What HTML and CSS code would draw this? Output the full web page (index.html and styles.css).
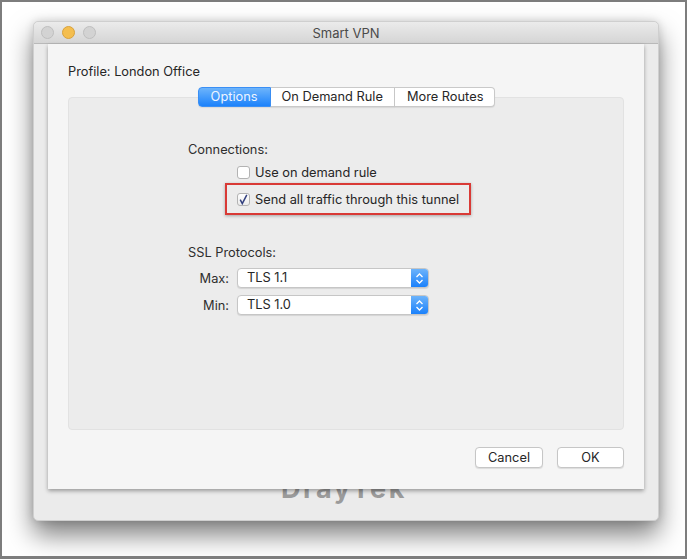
FILE: index.html
```html
<!DOCTYPE html>
<html lang="en">
<head>
    <meta charset="UTF-8">
    <title>Smart VPN</title>
    <link rel="stylesheet" href="styles.css">
</head>
<body>
<div class="frame">
    <div class="window">
        <div class="titlebar">
            <div class="lights">
                <span class="light"></span>
                <span class="light light-yellow"></span>
                <span class="light"></span>
            </div>
            <div class="title">Smart VPN</div>
        </div>
        <div class="window-body">
            <div class="ghost">DrayTek</div>

            <div class="sheet">
                <div class="profile">Profile: London Office</div>

                <div class="tabs">
                    <span class="tab tab-active">Options</span>
                    <span class="tab">On Demand Rule</span>
                    <span class="tab">More Routes</span>
                </div>

                <div class="tab-box">
                    <div class="section-title">Connections:</div>
                    <div class="check-row">
                        <span class="checkbox"></span>
                        <span>Use on demand rule</span>
                    </div>
                    <div class="highlight">
                        <div class="check-row check-row-inner">
                            <span class="checkbox checked">
                                <svg width="11" height="11" viewBox="0 0 11 11"><path d="M2.2 5.6 L4.3 9.6 L8.8 0.8" fill="none" stroke="#33407f" stroke-width="1.5"/></svg>
                            </span>
                            <span>Send all traffic through this tunnel</span>
                        </div>
                    </div>

                    <div class="section-title ssl-title">SSL Protocols:</div>
                    <div class="proto-grid">
                        <span class="proto-label">Max:</span>
                        <div class="select">
                            <span class="select-value">TLS 1.1</span>
                            <span class="stepper">
                                <svg width="9" height="13" viewBox="0 0 9 13"><path d="M1.5 5 L4.5 2 L7.5 5 M1.5 8 L4.5 11 L7.5 8" fill="none" stroke="#fff" stroke-width="1.3"/></svg>
                            </span>
                        </div>
                        <span class="proto-label">Min:</span>
                        <div class="select">
                            <span class="select-value">TLS 1.0</span>
                            <span class="stepper">
                                <svg width="9" height="13" viewBox="0 0 9 13"><path d="M1.5 5 L4.5 2 L7.5 5 M1.5 8 L4.5 11 L7.5 8" fill="none" stroke="#fff" stroke-width="1.3"/></svg>
                            </span>
                        </div>
                    </div>
                </div>

                <div class="buttons">
                    <button class="btn btn-cancel">Cancel</button>
                    <button class="btn btn-ok">OK</button>
                </div>
            </div>
        </div>
    </div>
</div>
</body>
</html>
```

FILE: styles.css
```css
body {
    margin: 0;
    padding: 0;
    font-family: Inter, Roboto, "Liberation Sans", sans-serif;
    font-size: 12.8px;
    color: #262626;
    background: #ffffff;
}
.frame {
    box-sizing: border-box;
    width: 687px;
    height: 559px;
    border: 2px solid #7d7d7d;
    border-bottom-width: 3px;
    background: #ffffff;
    padding: 19px 0 0 31px;
    overflow: hidden;
}
.window {
    box-sizing: border-box;
    width: 626px;
    height: 500px;
    background: #ebebeb;
    border: 1px solid #cfcfcf;
    border-radius: 5px;
    box-shadow: 0 14px 26px rgba(0, 0, 0, 0.5), 0 0 8px rgba(0, 0, 0, 0.15);
    position: relative;
}
.titlebar {
    height: 21px;
    border-bottom: 1px solid #b9b9b9;
    border-radius: 5px 5px 0 0;
    background: linear-gradient(#ebebeb, #d5d5d5);
    display: flex;
    align-items: center;
    position: relative;
}
.lights {
    display: flex;
    gap: 8px;
    padding-left: 7px;
}
.light {
    width: 11px;
    height: 11px;
    border-radius: 50%;
    background: #d3d3d3;
    border: 1px solid #bfbfbf;
}
.light-yellow {
    background: #f4be4f;
    border-color: #d9a23c;
}
.title {
    position: absolute;
    left: 0;
    right: 0;
    text-align: center;
    color: #4a4a4a;
    font-size: 13px;
}
.window-body {
    position: relative;
    height: 477px;
}
.ghost {
    position: absolute;
    left: 247px;
    top: 428px;
    font-size: 27px;
    font-weight: bold;
    letter-spacing: 2.5px;
    color: #9b9b9b;
}
.sheet {
    position: relative;
    z-index: 1;
    box-sizing: border-box;
    width: 596px;
    height: 445px;
    margin-left: 14px;
    background: #f5f5f5;
    box-shadow: 0 2px 4px rgba(0, 0, 0, 0.35);
    padding: 20px 20px 0 20px;
}
.profile {
    line-height: 16px;
}
.tabs {
    position: relative;
    z-index: 1;
    display: flex;
    justify-content: center;
    margin-top: 7px;
    margin-left: 1px;
}
.tab {
    box-sizing: border-box;
    height: 20px;
    line-height: 18px;
    padding: 0 11px;
    background: #ffffff;
    border: 1px solid #c9c9c9;
    border-left: none;
    box-shadow: 0 1px 1px rgba(0, 0, 0, 0.08);
}
.tab:last-child {
    border-radius: 0 4px 4px 0;
    padding: 0 11px 0 12px;
}
.tab-active {
    background: linear-gradient(#6db4fb, #1c82fb);
    border: 1px solid #3a8ff5;
    color: #eef5ff;
    border-radius: 4px 0 0 4px;
    padding: 0 12px;
}
.tab-box {
    box-sizing: border-box;
    height: 333px;
    margin-top: -10px;
    background: #ececec;
    border: 1px solid #e2e2e2;
    border-radius: 4px;
    padding: 44px 0 0 119px;
}
.section-title {
    line-height: 16px;
    color: #2e2e2e;
}
.check-row {
    display: flex;
    align-items: center;
    gap: 5px;
    height: 16px;
    margin-top: 6px;
    padding-left: 49px;
}
.checkbox {
    box-sizing: border-box;
    width: 13px;
    height: 13px;
    background: #ffffff;
    border: 1px solid #b3b3b3;
    border-radius: 3px;
    display: flex;
    align-items: center;
    justify-content: center;
}
.checkbox.checked {
    background: linear-gradient(#ffffff, #ececec);
}
.highlight {
    box-sizing: border-box;
    width: 246px;
    height: 32px;
    margin: 3px 0 0 37px;
    border: 2px solid #d93a36;
    box-shadow: 0 1px 3px rgba(0, 0, 0, 0.3);
    display: flex;
    align-items: center;
}
.check-row-inner {
    margin-top: 0;
    padding-left: 10px;
}
.ssl-title {
    margin-top: 30px;
}
.proto-grid {
    display: grid;
    grid-template-columns: 41px 192px;
    column-gap: 8px;
    row-gap: 7px;
    margin-top: 7px;
    align-items: center;
}
.proto-label {
    text-align: right;
    color: #2e2e2e;
}
.select {
    box-sizing: border-box;
    height: 20px;
    background: #ffffff;
    border: 1px solid #c6c6c6;
    border-radius: 4px;
    box-shadow: 0 1px 1px rgba(0, 0, 0, 0.1);
    display: flex;
    justify-content: space-between;
    overflow: hidden;
}
.select-value {
    line-height: 18px;
    padding-left: 9px;
}
.stepper {
    width: 17px;
    background: linear-gradient(#6cb3fb, #1b81fb);
    display: flex;
    align-items: center;
    justify-content: center;
}
.buttons {
    display: flex;
    justify-content: flex-end;
    gap: 14px;
    margin-top: 17px;
}
.btn {
    box-sizing: border-box;
    height: 21px;
    font-family: Inter, Roboto, "Liberation Sans", sans-serif;
    font-size: 12.8px;
    color: #262626;
    background: #ffffff;
    border: 1px solid #c6c6c6;
    border-radius: 4px;
    box-shadow: 0 1px 1px rgba(0, 0, 0, 0.1);
    padding: 0;
}
.btn-cancel {
    width: 68px;
}
.btn-ok {
    width: 67px;
}
```
